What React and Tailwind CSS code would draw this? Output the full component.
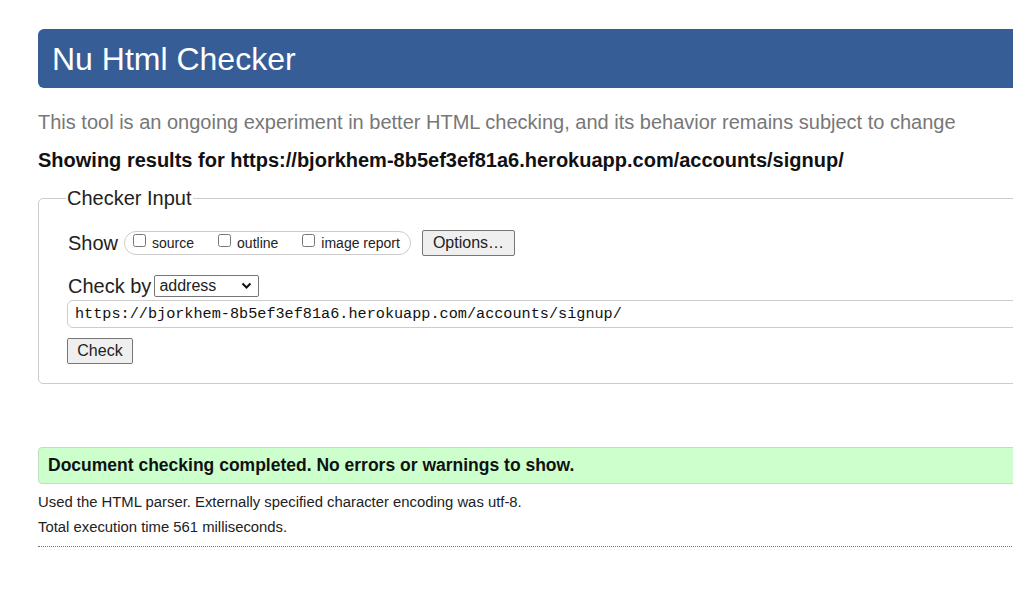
export default function App() {
  return (
    <div className="w-[1013px] h-[592px] overflow-hidden bg-white font-['Liberation_Sans',Arial,sans-serif] text-[#222]">
      <div className="w-[1100px] pl-[38px] pt-[29px]">
        <h1 className="h-[59px] flex items-center pl-[14px] bg-[#365d96] rounded-l-[6px] text-white text-[32px] leading-none">
          Nu Html Checker
        </h1>
        <p className="mt-[22px] text-[20px] leading-[24px] text-[#777]">
          This tool is an ongoing experiment in better HTML checking, and its behavior remains subject to change
        </p>
        <p className="mt-[14px] text-[20px] leading-[24px] font-bold text-[#111]">
          Showing results for https://bjorkhem-8b5ef3ef81a6.herokuapp.com/accounts/signup/
        </p>

        <fieldset className="mt-[15px] border border-[#ccc] rounded-[5px] pl-[29px] pr-4 pb-[19px]">
          <legend className="-ml-[2px] px-[1px] text-[20px] leading-[22px] text-[#222]">Checker Input</legend>

          <div className="mt-[21px] flex items-center h-[26px]">
            <span className="text-[20px] mr-[6px]">Show</span>
            <div className="flex items-center h-[24px] border border-[#ccc] rounded-full pl-[8px] pr-[10px] text-[14px]">
              <label className="flex items-center mr-[24px]">
                <input type="checkbox" className="w-[13px] h-[13px] mr-[6px] -mt-[5px]" />
                source
              </label>
              <label className="flex items-center mr-[24px]">
                <input type="checkbox" className="w-[13px] h-[13px] mr-[6px] -mt-[5px]" />
                outline
              </label>
              <label className="flex items-center">
                <input type="checkbox" className="w-[13px] h-[13px] mr-[6px] -mt-[5px]" />
                image report
              </label>
            </div>
            <button className="ml-[11px] h-[26px] px-[10px] border border-[#767676] rounded-[2px] bg-[#efefef] text-[16px] leading-none">
              Options…
            </button>
          </div>

          <div className="mt-[19px] flex items-center h-[22px]">
            <span className="text-[20px] mr-[3px]">Check by</span>
            <div className="relative w-[105px] h-[22px] border border-[#767676] rounded-[2px] bg-white text-[16px] flex items-center pl-[4px]">
              address
              <svg className="absolute right-[6px] top-[6px]" width="11" height="8" viewBox="0 0 11 8">
                <path d="M1.5 1.5 L5.5 5.5 L9.5 1.5" fill="none" stroke="#111" strokeWidth="2" />
              </svg>
            </div>
          </div>

          <div className="mt-[3px] -ml-[1px] h-[28px] border border-[#ccc] rounded-l-[6px] flex items-center pl-[7px] font-['Liberation_Mono',monospace] text-[15.2px] text-[#111]">
            https://bjorkhem-8b5ef3ef81a6.herokuapp.com/accounts/signup/
          </div>

          <button className="mt-[10px] -ml-[1px] h-[26px] w-[66px] border border-[#767676] rounded-[2px] bg-[#efefef] text-[16px] leading-none">
            Check
          </button>
        </fieldset>

        <div className="mt-[63px] h-[37px] flex items-center pl-[9px] bg-[#ccffcc] border border-[#bde0bd] rounded-l-[4px] text-[17.5px] font-bold text-[#111]">
          Document checking completed. No errors or warnings to show.
        </div>
        <p className="mt-[10px] text-[14.85px] leading-[17px] text-[#222]">
          Used the HTML parser. Externally specified character encoding was utf-8.
        </p>
        <p className="mt-[8px] text-[14.85px] leading-[17px] text-[#222]">Total execution time 561 milliseconds.</p>
        <div className="mt-[10px] border-b border-dotted border-[#777]"></div>
      </div>
    </div>
  );
}
